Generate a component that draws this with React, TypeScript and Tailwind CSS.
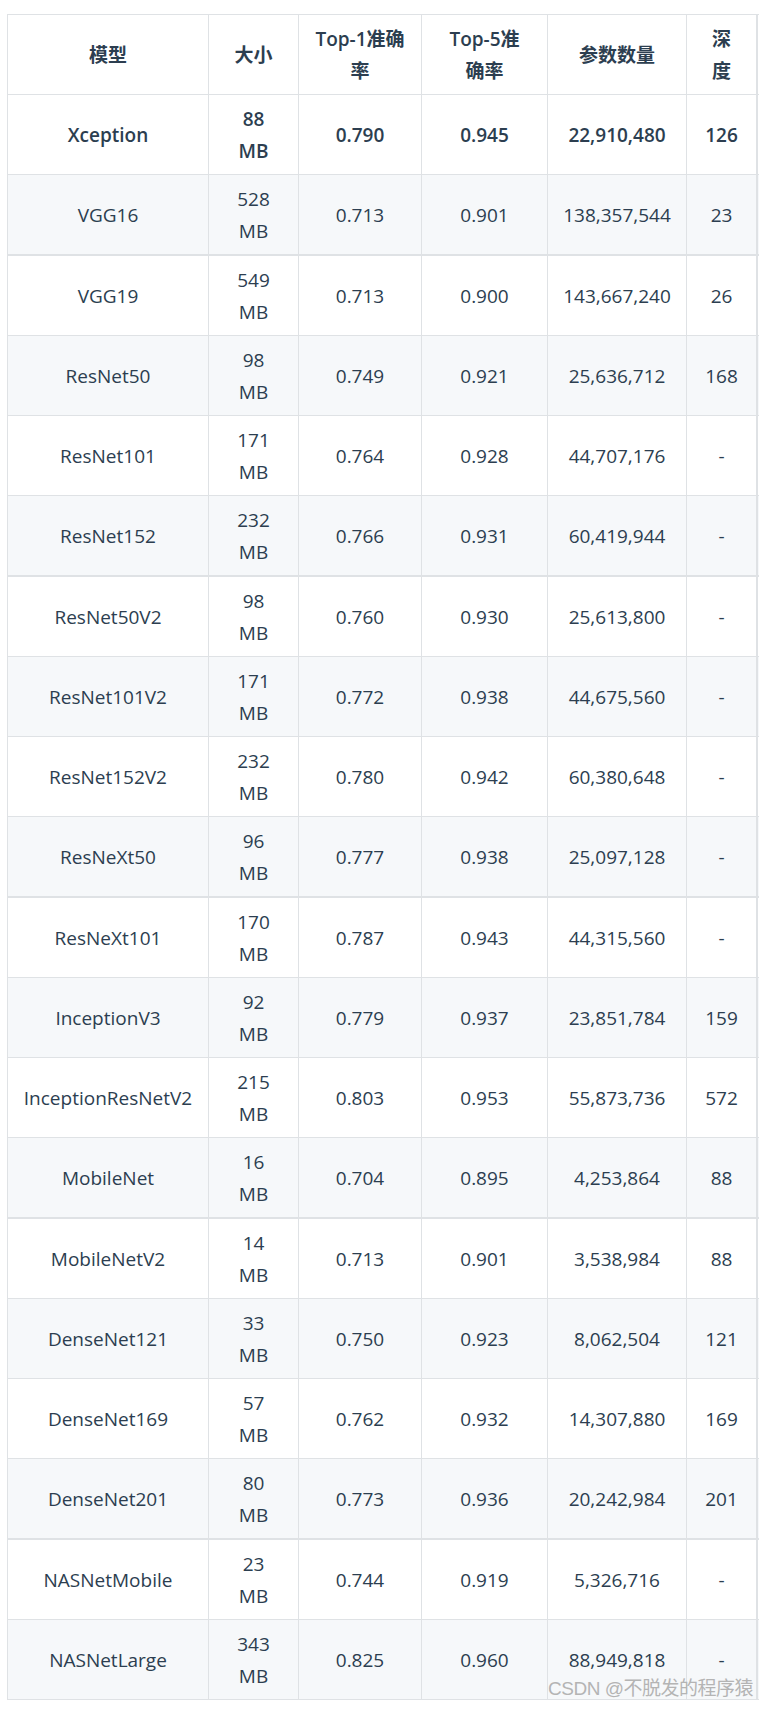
type ModelRow = {
  name: string;
  size: string;
  top1: string;
  top5: string;
  params: string;
  depth: string;
};

const models: ModelRow[] = [
  { name: "Xception", size: "88", top1: "0.790", top5: "0.945", params: "22,910,480", depth: "126" },
  { name: "VGG16", size: "528", top1: "0.713", top5: "0.901", params: "138,357,544", depth: "23" },
  { name: "VGG19", size: "549", top1: "0.713", top5: "0.900", params: "143,667,240", depth: "26" },
  { name: "ResNet50", size: "98", top1: "0.749", top5: "0.921", params: "25,636,712", depth: "168" },
  { name: "ResNet101", size: "171", top1: "0.764", top5: "0.928", params: "44,707,176", depth: "-" },
  { name: "ResNet152", size: "232", top1: "0.766", top5: "0.931", params: "60,419,944", depth: "-" },
  { name: "ResNet50V2", size: "98", top1: "0.760", top5: "0.930", params: "25,613,800", depth: "-" },
  { name: "ResNet101V2", size: "171", top1: "0.772", top5: "0.938", params: "44,675,560", depth: "-" },
  { name: "ResNet152V2", size: "232", top1: "0.780", top5: "0.942", params: "60,380,648", depth: "-" },
  { name: "ResNeXt50", size: "96", top1: "0.777", top5: "0.938", params: "25,097,128", depth: "-" },
  { name: "ResNeXt101", size: "170", top1: "0.787", top5: "0.943", params: "44,315,560", depth: "-" },
  { name: "InceptionV3", size: "92", top1: "0.779", top5: "0.937", params: "23,851,784", depth: "159" },
  { name: "InceptionResNetV2", size: "215", top1: "0.803", top5: "0.953", params: "55,873,736", depth: "572" },
  { name: "MobileNet", size: "16", top1: "0.704", top5: "0.895", params: "4,253,864", depth: "88" },
  { name: "MobileNetV2", size: "14", top1: "0.713", top5: "0.901", params: "3,538,984", depth: "88" },
  { name: "DenseNet121", size: "33", top1: "0.750", top5: "0.923", params: "8,062,504", depth: "121" },
  { name: "DenseNet169", size: "57", top1: "0.762", top5: "0.932", params: "14,307,880", depth: "169" },
  { name: "DenseNet201", size: "80", top1: "0.773", top5: "0.936", params: "20,242,984", depth: "201" },
  { name: "NASNetMobile", size: "23", top1: "0.744", top5: "0.919", params: "5,326,716", depth: "-" },
  { name: "NASNetLarge", size: "343", top1: "0.825", top5: "0.960", params: "88,949,818", depth: "-" },
];

// screenshot has a slightly heavier line after every 4th row starting at VGG16
const thickAfter = [1, 5, 9, 13, 17];

const cell =
  "flex items-center justify-center text-center whitespace-nowrap border-r border-[#dfe2e5] px-2";

function Row({ m, index }: { m: ModelRow; index: number }) {
  const bold = index === 0;
  const thick = thickAfter.includes(index);
  return (
    <div
      className={`flex ${thick ? "h-[81px] border-b-2" : "h-[80px] border-b"} border-[#dfe2e5] ${
        index % 2 === 1 ? "bg-[#f6f8fa]" : "bg-white"
      } ${bold ? "font-semibold" : ""}`}
    >
      <div className={`${cell} w-[201px]`}>{m.name}</div>
      <div className={`${cell} w-[90px]`}>
        <span>
          {m.size}
          <br />
          MB
        </span>
      </div>
      <div className={`${cell} w-[123px]`}>{m.top1}</div>
      <div className={`${cell} w-[126px]`}>{m.top5}</div>
      <div className={`${cell} w-[139px]`}>{m.params}</div>
      <div className={`${cell} w-[71px] border-r-2`}>{m.depth}</div>
    </div>
  );
}

export default function App() {
  return (
    <div className="bg-white min-h-[1709px] pt-[14px] pl-[7px] font-['Open_Sans','Noto_Sans_CJK_SC',sans-serif] text-[19px] leading-[32px] text-[#2c3e50]">
      <div className="relative w-[752px] border-t border-l border-[#dfe2e5]">
        <div className="flex h-[80px] border-b border-[#dfe2e5] bg-white font-semibold">
          <div className={`${cell} w-[201px]`}>模型</div>
          <div className={`${cell} w-[90px]`}>大小</div>
          <div className={`${cell} w-[123px]`}>
            <span>
              Top-1准确
              <br />率
            </span>
          </div>
          <div className={`${cell} w-[126px]`}>
            <span>
              Top-5准
              <br />
              确率
            </span>
          </div>
          <div className={`${cell} w-[139px]`}>参数数量</div>
          <div className={`${cell} w-[71px] border-r-2`}>
            <span>
              深
              <br />度
            </span>
          </div>
        </div>
        {models.map((m, i) => (
          <Row key={m.name} m={m} index={i} />
        ))}
        <div className="absolute right-[6px] bottom-[0px] text-[19px] leading-[22px] text-[#b4b4b4] font-['Liberation_Sans','Noto_Sans_CJK_SC',sans-serif] tracking-[-0.5px]">
          CSDN @不脱发的程序猿
        </div>
      </div>
    </div>
  );
}
